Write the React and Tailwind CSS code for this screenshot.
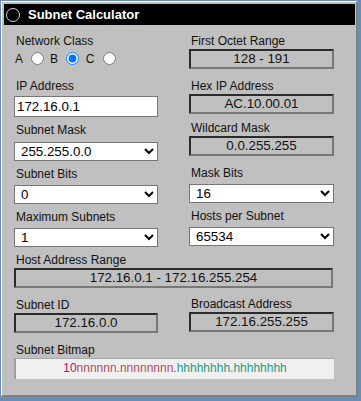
import React from 'react';

const Label = ({ children }) => (
  <div className="h-[16px] pl-[2px] text-[12px] leading-[16px] text-[#111]">{children}</div>
);

const Output = ({ value }) => (
  <div className="h-[20px] border-2 border-t-[#2b2b2b] border-l-[#2b2b2b] border-r-[#787878] border-b-[#787878] text-center text-[13.333px] leading-[16px] text-[#111]">
    {value}
  </div>
);

const Select = ({ value, options }) => (
  <select
    defaultValue={value}
    className="h-[19px] w-full border border-[#767676] bg-white pl-[2px] text-[13.333px] text-black"
  >
    {options.map((o) => (
      <option key={o}>{o}</option>
    ))}
  </select>
);

const Radio = ({ checked }) => (
  <input
    type="radio"
    name="cls"
    defaultChecked={checked}
    className="ml-[5px] mr-[3px] inline-block h-[13px] w-[13px] align-[-2px]"
  />
);

const App = () => {
  return (
    <div className="min-h-screen bg-[#6a8db5] pl-px pt-px font-['Liberation_Sans',Arial,sans-serif]">
      <div className="h-[396px] w-[357px] border-l border-t border-b-2 border-r-2 border-l-white border-t-white border-b-[#808080] border-r-[#808080] bg-[#c0c0c0]">
        {/* Title bar */}
        <div className="ml-[2px] mr-[1px] mt-[2px] flex h-[21px] items-center gap-[8px] bg-black pl-[2px]">
          <div className="h-[14px] w-[14px] rounded-full border border-[#d0d0d0] bg-black" />
          <span className="text-[13px] font-bold text-white">Subnet Calculator</span>
        </div>

        <div className="mt-[8px] grid grid-cols-[144px_145px] grid-rows-[45px_44px_44px_43px_43px_45px_45px_auto] gap-x-[31px] pl-[12px]">
          {/* Network class */}
          <div>
            <Label>Network Class</Label>
            <div className="h-[20px] whitespace-pre pl-px pt-[2px] text-[12px] leading-[16px] text-[#111]">
              {'A '}
              <Radio />
              {' B '}
              <Radio checked />
              {' C '}
              <Radio />
            </div>
          </div>
          <div>
            <Label>First Octet Range</Label>
            <Output value="128 - 191" />
          </div>

          {/* IP / Hex */}
          <div>
            <Label>IP Address</Label>
            <input
              type="text"
              defaultValue="172.16.0.1"
              className="h-[21px] w-full border border-[#767676] bg-white px-[2px] text-[13.333px] text-black"
            />
          </div>
          <div>
            <Label>Hex IP Address</Label>
            <Output value="AC.10.00.01" />
          </div>

          {/* Mask / Wildcard */}
          <div>
            <Label>Subnet Mask</Label>
            <div className="pt-px">
              <Select value="255.255.0.0" options={['255.255.0.0', '255.255.128.0', '255.255.192.0']} />
            </div>
          </div>
          <div className="-mt-[2px]">
            <Label>Wildcard Mask</Label>
            <Output value="0.0.255.255" />
          </div>

          {/* Subnet bits / Mask bits */}
          <div>
            <Label>Subnet Bits</Label>
            <Select value="0" options={['0', '1', '2', '3']} />
          </div>
          <div className="-mt-px">
            <Label>Mask Bits</Label>
            <Select value="16" options={['16', '17', '18', '19']} />
          </div>

          {/* Max subnets / Hosts */}
          <div>
            <Label>Maximum Subnets</Label>
            <Select value="1" options={['1', '2', '4', '8']} />
          </div>
          <div className="-mt-px">
            <Label>Hosts per Subnet</Label>
            <Select value="65534" options={['65534', '32766', '16382']} />
          </div>

          {/* Host range */}
          <div className="col-span-2 pr-px">
            <Label>Host Address Range</Label>
            <Output value="172.16.0.1 - 172.16.255.254" />
          </div>

          {/* Subnet ID / Broadcast */}
          <div>
            <Label>Subnet ID</Label>
            <Output value="172.16.0.0" />
          </div>
          <div className="-mt-px">
            <Label>Broadcast Address</Label>
            <Output value="172.16.255.255" />
          </div>

          {/* Bitmap */}
          <div className="col-span-2">
            <Label>Subnet Bitmap</Label>
            <div className="h-[21px] border-l-2 border-t border-l-[#a0a0a0] border-t-[#a8a8a8] bg-[#f0f0f0] text-center text-[12px] leading-[19px]">
              <span className="text-[#d8006a]">10</span>
              <span className="text-[#b84860]">nnnnnn.nnnnnnnn.</span>
              <span className="text-[#1e9c80]">hhhhhhhh.hhhhhhhh</span>
            </div>
          </div>
        </div>
      </div>
    </div>
  );
};

export default App;
